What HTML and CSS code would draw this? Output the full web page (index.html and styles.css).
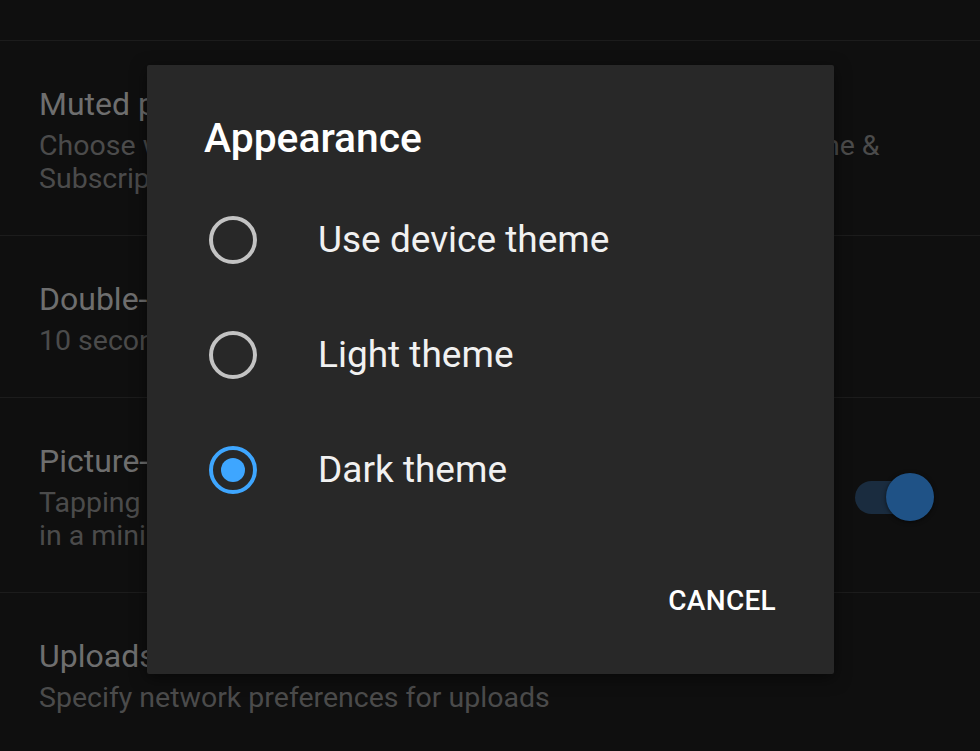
FILE: index.html
```html
<!DOCTYPE html>
<html lang="en">
<head>
<meta charset="utf-8">
<title>Settings - Appearance</title>
<link rel="stylesheet" href="styles.css">
</head>
<body>
<div class="screen">
  <div class="settings">
    <div class="item item-top"></div>
    <div class="item">
      <div class="item-text">
        <div class="item-title">Muted playback in feeds</div>
        <div class="item-sub">Choose whether videos in feed play muted while browsing Home &amp;<br>Subscriptions</div>
      </div>
    </div>
    <div class="item">
      <div class="item-text">
        <div class="item-title">Double-tap to seek</div>
        <div class="item-sub">10 seconds</div>
      </div>
    </div>
    <div class="item">
      <div class="item-text">
        <div class="item-title">Picture-in-picture</div>
        <div class="item-sub">Tapping home while watching a video will continue<br>in a miniature player</div>
      </div>
      <div class="toggle">
        <div class="toggle-track"></div>
        <div class="toggle-knob"></div>
      </div>
    </div>
    <div class="item item-last">
      <div class="item-text">
        <div class="item-title">Uploads</div>
        <div class="item-sub">Specify network preferences for uploads</div>
      </div>
    </div>
  </div>

  <div class="dialog">
    <div class="dialog-title">Appearance</div>
    <div class="options">
      <div class="option">
        <span class="radio"></span>
        <span class="option-label">Use device theme</span>
      </div>
      <div class="option">
        <span class="radio"></span>
        <span class="option-label">Light theme</span>
      </div>
      <div class="option">
        <span class="radio radio-on"></span>
        <span class="option-label">Dark theme</span>
      </div>
    </div>
    <div class="dialog-actions">
      <span class="btn">CANCEL</span>
    </div>
  </div>
</div>
</body>
</html>
```

FILE: styles.css
```css
* { box-sizing: border-box; }

html, body {
  margin: 0;
  padding: 0;
  background: #0f0f0f;
}

body {
  font-family: Roboto, "Noto Sans", "Liberation Sans", sans-serif;
  width: 980px;
  height: 751px;
  overflow: hidden;
}

.screen {
  position: relative;
  width: 980px;
  height: 751px;
  background: #0f0f0f;
}

.settings {
  display: flex;
  flex-direction: column;
}

.item {
  display: flex;
  align-items: center;
  padding: 43px 46px 40px 39px;
  border-bottom: 1px solid #1c1c1c;
}

.item-top {
  height: 41px;
  padding: 0;
}

.item-last {
  border-bottom: none;
}

.item-text {
  flex: 1;
  min-width: 0;
}

.item-title {
  font-size: 32px;
  line-height: 40px;
  color: #6e6e6e;
  white-space: nowrap;
}

.item-sub {
  margin-top: 5px;
  font-size: 28.5px;
  line-height: 33px;
  color: #4b4b4b;
  white-space: nowrap;
}

.toggle {
  position: relative;
  width: 79px;
  height: 48px;
  flex: none;
}

.toggle-track {
  position: absolute;
  left: 0;
  top: 8px;
  width: 66px;
  height: 33px;
  border-radius: 17px;
  background: #1a2c3f;
}

.toggle-knob {
  position: absolute;
  right: 0;
  top: 0;
  width: 48px;
  height: 48px;
  border-radius: 50%;
  background: #1f5286;
  box-shadow: 0 1px 4px rgba(0, 0, 0, 0.6);
}

.dialog {
  position: absolute;
  left: 147px;
  top: 65px;
  width: 687px;
  height: 609px;
  background: #282828;
  border-radius: 2px;
  padding: 49px 58px 55px 57px;
  display: flex;
  flex-direction: column;
  box-shadow: 0 4px 16px rgba(0, 0, 0, 0.5);
}

.dialog-title {
  font-size: 40.8px;
  line-height: 48px;
  font-weight: 500;
  color: #ffffff;
}

.options {
  margin-top: 20px;
  display: flex;
  flex-direction: column;
}

.option {
  display: flex;
  align-items: center;
  height: 115px;
  padding-left: 5px;
}

.radio {
  width: 48px;
  height: 48px;
  border-radius: 50%;
  border: 4px solid #c3c3c3;
  flex: none;
  display: flex;
  align-items: center;
  justify-content: center;
}

.radio-on {
  border-color: #3ea6ff;
}

.radio-on::after {
  content: "";
  width: 24px;
  height: 24px;
  border-radius: 50%;
  background: #3ea6ff;
}

.option-label {
  margin-left: 61px;
  font-size: 37px;
  line-height: 44px;
  color: #f1f1f1;
}

.dialog-actions {
  margin-top: auto;
  display: flex;
  justify-content: flex-end;
}

.btn {
  font-size: 28px;
  line-height: 36px;
  font-weight: 500;
  color: #ffffff;
  letter-spacing: 0.3px;
}
```
